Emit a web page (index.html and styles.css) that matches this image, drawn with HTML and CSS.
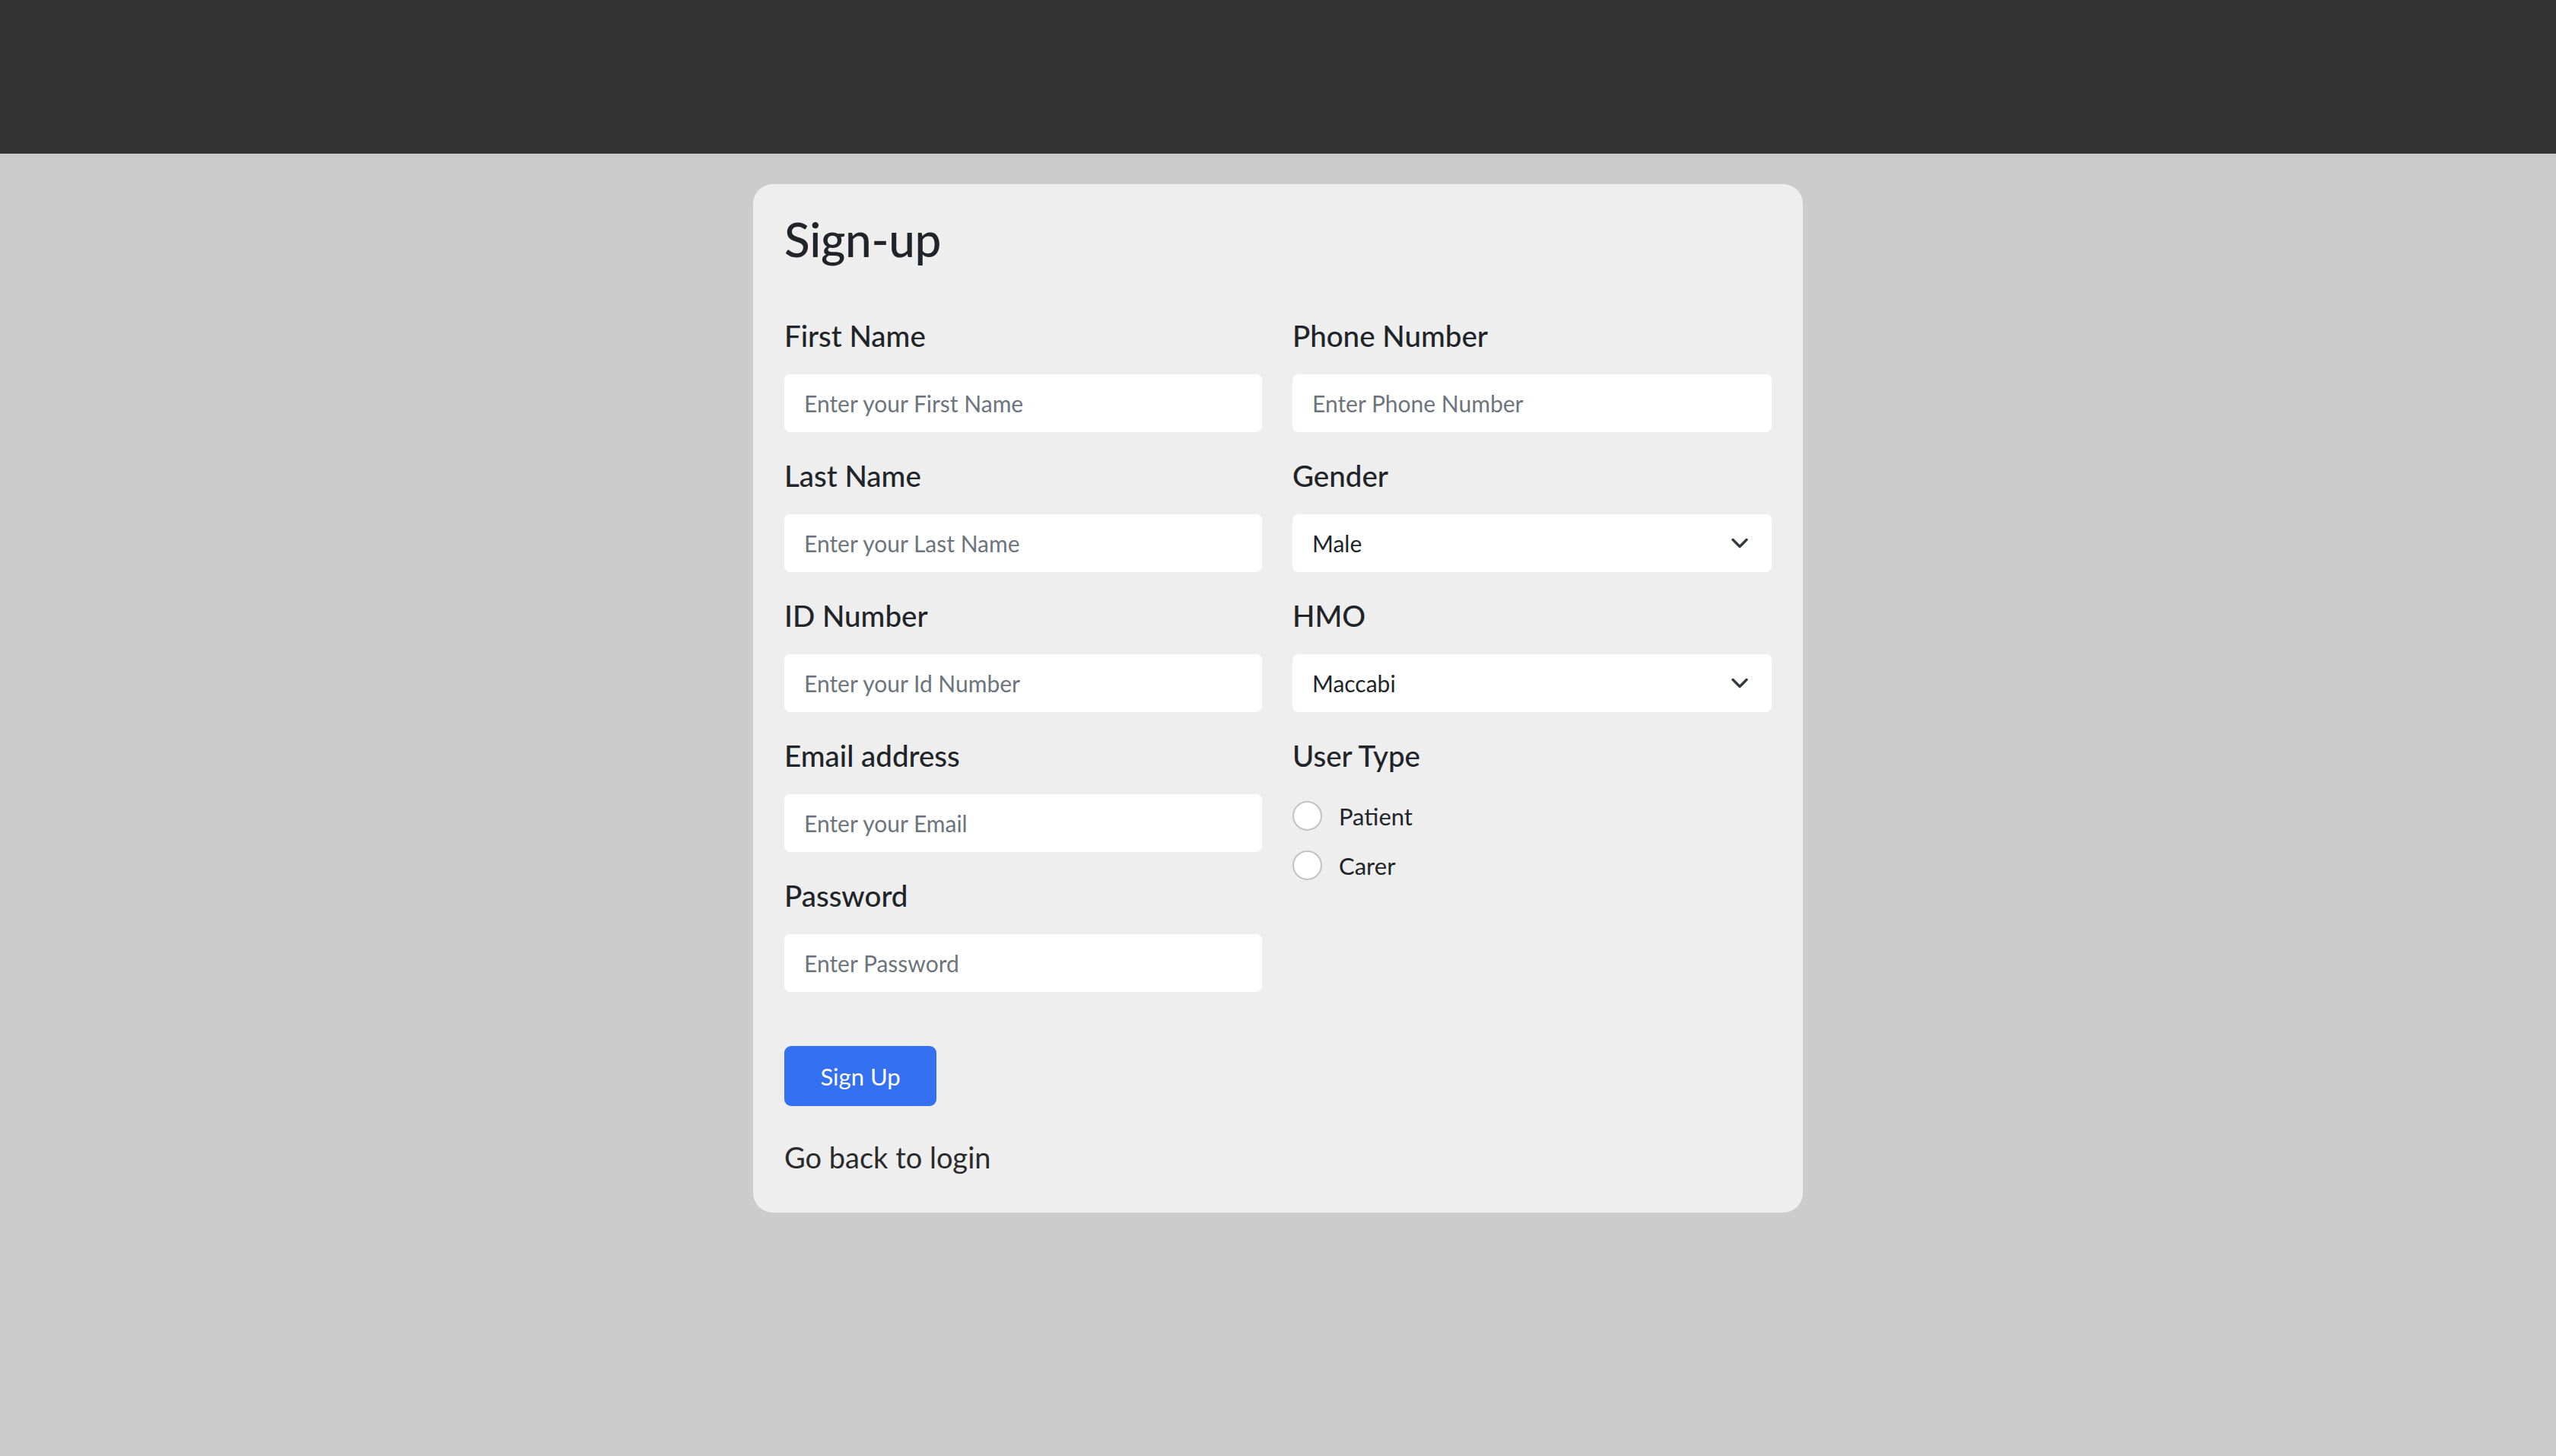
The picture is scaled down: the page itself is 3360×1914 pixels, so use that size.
FILE: index.html
```html
<!DOCTYPE html>
<html lang="en">
<head>
<meta charset="utf-8">
<title>Sign-up</title>
<link rel="stylesheet" href="styles.css">
</head>
<body>
<header class="topbar"></header>
<main class="page">
  <section class="card">
    <h2 class="title">Sign-up</h2>
    <form class="form">
      <div class="grid">
        <div class="col">
          <div class="field">
            <label class="label" for="fn">First Name</label>
            <input class="control" id="fn" type="text" placeholder="Enter your First Name">
          </div>
          <div class="field">
            <label class="label" for="ln">Last Name</label>
            <input class="control" id="ln" type="text" placeholder="Enter your Last Name">
          </div>
          <div class="field">
            <label class="label" for="idn">ID Number</label>
            <input class="control" id="idn" type="text" placeholder="Enter your Id Number">
          </div>
          <div class="field">
            <label class="label" for="em">Email address</label>
            <input class="control" id="em" type="email" placeholder="Enter your Email">
          </div>
          <div class="field">
            <label class="label" for="pw">Password</label>
            <input class="control" id="pw" type="password" placeholder="Enter Password">
          </div>
        </div>
        <div class="col">
          <div class="field">
            <label class="label" for="ph">Phone Number</label>
            <input class="control" id="ph" type="text" placeholder="Enter Phone Number">
          </div>
          <div class="field">
            <label class="label" for="gd">Gender</label>
            <div class="select-wrap">
              <select class="control select" id="gd">
                <option>Male</option>
                <option>Female</option>
              </select>
              <svg class="chevron" width="26" height="16" viewBox="0 0 26 16"><path d="M4 3.5l9 9 9-9" fill="none" stroke="#343a40" stroke-width="3.4" stroke-linecap="round" stroke-linejoin="round"/></svg>
            </div>
          </div>
          <div class="field">
            <label class="label" for="hm">HMO</label>
            <div class="select-wrap">
              <select class="control select" id="hm">
                <option>Maccabi</option>
                <option>Clalit</option>
                <option>Meuhedet</option>
                <option>Leumit</option>
              </select>
              <svg class="chevron" width="26" height="16" viewBox="0 0 26 16"><path d="M4 3.5l9 9 9-9" fill="none" stroke="#343a40" stroke-width="3.4" stroke-linecap="round" stroke-linejoin="round"/></svg>
            </div>
          </div>
          <div class="field">
            <span class="label label-radio">User Type</span>
            <label class="radio-row"><input class="radio" type="radio" name="ut"><span>Patient</span></label>
            <label class="radio-row"><input class="radio" type="radio" name="ut"><span>Carer</span></label>
          </div>
        </div>
      </div>
      <button class="btn" type="button">Sign Up</button>
      <p class="back">Go back to login</p>
    </form>
  </section>
</main>
</body>
</html>
```

FILE: styles.css
```css
html, body {
  margin: 0;
  padding: 0;
}

body {
  background: #cccccc;
  min-height: 100vh;
  font-family: "Lato", "Noto Sans", sans-serif;
  color: #212529;
}

.topbar {
  height: 202px;
  background: #333333;
}

.page {
  padding-top: 40px;
}

.card {
  width: 1380px;
  box-sizing: border-box;
  margin: 0 auto;
  background: #eeeeee;
  border-radius: 26px;
  padding: 33px 41px 49px;
}

.title {
  margin: 0;
  font-size: 62px;
  line-height: 78px;
  font-weight: 500;
  letter-spacing: -0.3px;
  color: #212529;
}

.form {
  margin-top: 65px;
}

.grid {
  display: grid;
  grid-template-columns: 628px 630px;
  column-gap: 40px;
}

.field {
  margin-bottom: 34px;
}

.label {
  display: block;
  font-size: 38.5px;
  line-height: 47px;
  font-weight: 500;
  margin-bottom: 27px;
  color: #212529;
}

.label-radio {
  margin-bottom: 36px;
}

.control {
  display: block;
  width: 100%;
  box-sizing: border-box;
  height: 76px;
  padding: 0 26px;
  border: none;
  border-radius: 8px;
  background: #ffffff;
  font-family: "Lato", "Noto Sans", sans-serif;
  font-size: 30px;
  color: #212529;
  outline: none;
}

.control::placeholder {
  color: #6c757d;
}

.select-wrap {
  position: relative;
}

.select {
  appearance: none;
  -webkit-appearance: none;
}

.chevron {
  position: absolute;
  right: 29px;
  top: 30px;
  pointer-events: none;
}

.radio-row {
  display: flex;
  align-items: center;
  gap: 22px;
  height: 39px;
  margin-bottom: 26px;
  font-size: 31px;
  color: #212529;
}

.radio {
  appearance: none;
  -webkit-appearance: none;
  margin: 0;
  width: 39px;
  height: 39px;
  box-sizing: border-box;
  border: 2px solid #c2c2c2;
  border-radius: 50%;
  background: #ffffff;
}

.btn {
  display: block;
  margin-top: 37px;
  width: 200px;
  height: 79px;
  border: none;
  border-radius: 9px;
  background: #3370f2;
  color: #ffffff;
  font-family: "Lato", "Noto Sans", sans-serif;
  font-size: 31px;
}

.back {
  margin: 43px 0 0;
  font-size: 38px;
  line-height: 48px;
  color: #2b2b2b;
}
```
